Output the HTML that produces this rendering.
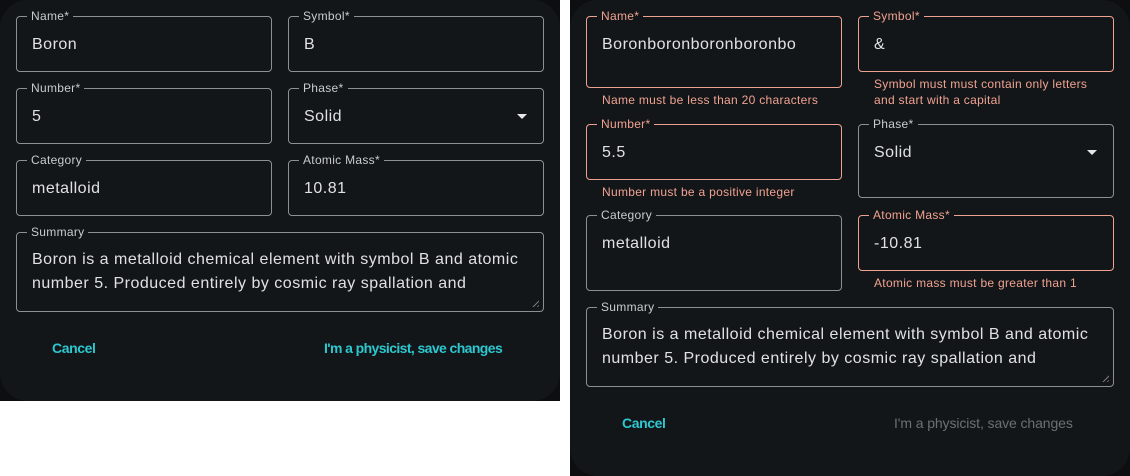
<!DOCTYPE html>
<html><head><meta charset="utf-8"><style>
*{box-sizing:border-box;margin:0;padding:0}
body{width:1130px;height:476px;background:#fff;position:relative;overflow:hidden;font-family:"Liberation Sans",sans-serif;}
.back{position:absolute;background:#0c0e0f}
.panel{position:absolute;background:#131618;}
.f{position:absolute;border:1px solid #8c9091;border-radius:4px;}
.f.e{border-color:#f0a291}
.lab{position:absolute;top:-9px;left:10px;padding:0 4px;background:#131618;color:#c9cccd;font-size:12px;line-height:16px;letter-spacing:.3px}
.e .lab{color:#f0a291}
.val{position:absolute;left:15px;top:18px;color:#dfe1e2;font-size:16px;line-height:20px;letter-spacing:.5px}
.err{position:absolute;color:#f0a291;font-size:12px;line-height:16px;letter-spacing:.3px}
.btn{position:absolute;color:#2dc7d0;font-size:14px;font-weight:bold;letter-spacing:-0.4px}
.arrow{position:absolute;right:16px;top:25px;width:0;height:0;border-left:5px solid transparent;border-right:5px solid transparent;border-top:5px solid #e6e8e8}
.sum{position:absolute;left:15px;top:15px;color:#dfe1e2;font-size:16px;line-height:24px;letter-spacing:.5px}
.grip{position:absolute;right:4px;bottom:4px;width:9px;height:9px;background:repeating-linear-gradient(135deg,transparent 0 2px,#777 2px 3px);clip-path:polygon(100% 0,100% 100%,0 100%)}
</style></head><body>
<div class="back" style="left:0;top:0;width:560px;height:401px"></div>
<div class="panel" style="left:0;top:0;width:560px;height:401px;border-radius:28px"></div>
<div class="back" style="left:570px;top:0;width:560px;height:476px"></div>
<div class="panel" style="left:570px;top:0;width:560px;height:476px;border-radius:28px"></div>

<div class="f" style="left:16px;top:16px;width:256px;height:56px"><span class="lab">Name*</span><span class="val">Boron</span></div>
<div class="f" style="left:288px;top:16px;width:256px;height:56px"><span class="lab">Symbol*</span><span class="val">B</span></div>
<div class="f" style="left:16px;top:88px;width:256px;height:56px"><span class="lab">Number*</span><span class="val">5</span></div>
<div class="f" style="left:288px;top:88px;width:256px;height:56px"><span class="lab">Phase*</span><span class="val">Solid</span><span class="arrow"></span></div>
<div class="f" style="left:16px;top:160px;width:256px;height:56px"><span class="lab">Category</span><span class="val">metalloid</span></div>
<div class="f" style="left:288px;top:160px;width:256px;height:56px"><span class="lab">Atomic Mass*</span><span class="val">10.81</span></div>
<div class="f" style="left:16px;top:232px;width:528px;height:80px"><span class="lab">Summary</span><span class="sum">Boron is a metalloid chemical element with symbol B and atomic<br>number 5. Produced entirely by cosmic ray spallation and</span><span class="grip"></span></div>
<div class="btn" style="left:52px;top:340px">Cancel</div>
<div class="btn" style="left:324px;top:340px;letter-spacing:-0.6px">I'm a physicist, save changes</div>

<div class="f e" style="left:586px;top:16px;width:256px;height:72px"><span class="lab">Name*</span><span class="val">Boronboronboronboronbo</span></div>
<div class="err" style="left:602px;top:92px">Name must be less than 20 characters</div>
<div class="f e" style="left:858px;top:16px;width:256px;height:56px"><span class="lab">Symbol*</span><span class="val">&amp;</span></div>
<div class="err" style="left:874px;top:76px">Symbol must must contain only letters<br>and start with a capital</div>
<div class="f e" style="left:586px;top:124px;width:256px;height:56px"><span class="lab">Number*</span><span class="val">5.5</span></div>
<div class="err" style="left:602px;top:184px">Number must be a positive integer</div>
<div class="f" style="left:858px;top:124px;width:256px;height:74px"><span class="lab">Phase*</span><span class="val">Solid</span><span class="arrow"></span></div>
<div class="f" style="left:586px;top:215px;width:256px;height:76px"><span class="lab">Category</span><span class="val">metalloid</span></div>
<div class="f e" style="left:858px;top:215px;width:256px;height:56px"><span class="lab">Atomic Mass*</span><span class="val">-10.81</span></div>
<div class="err" style="left:874px;top:275px">Atomic mass must be greater than 1</div>
<div class="f" style="left:586px;top:307px;width:528px;height:80px"><span class="lab">Summary</span><span class="sum">Boron is a metalloid chemical element with symbol B and atomic<br>number 5. Produced entirely by cosmic ray spallation and</span><span class="grip"></span></div>
<div class="btn" style="left:622px;top:415px">Cancel</div>
<div class="btn" style="left:894px;top:415px;color:#6c7071;font-weight:normal;letter-spacing:-0.1px">I'm a physicist, save changes</div>
</body></html>
